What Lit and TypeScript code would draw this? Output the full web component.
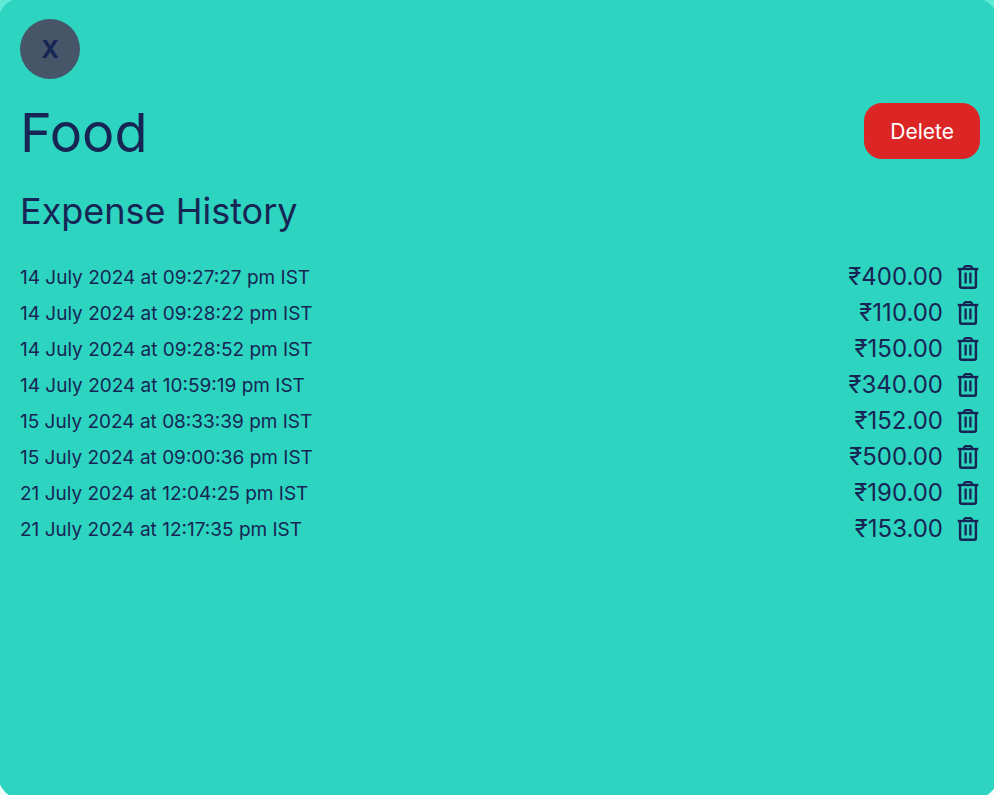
import { LitElement, html, css } from "lit";
import { customElement, state } from "lit/decorators.js";

interface Expense {
  date: string;
  amount: string;
}

@customElement("trash-icon")
class TrashIcon extends LitElement {
  static styles = css`
    :host { display: block; }
    svg { display: block; width: 24px; height: 28px; }
  `;
  render() {
    return html`<svg viewBox="0 0 24 28" fill="none" stroke="currentColor" stroke-width="2.3" stroke-linejoin="round" aria-hidden="true">
      <path d="M1.7 6H22.3" />
      <path d="M7.5 6L8.3 4.2Q8.8 3.1 9.8 3.1H14.2Q15.2 3.1 15.7 4.2L16.5 6" />
      <path d="M4.1 6V23.2Q4.1 24.7 5.6 24.7H18.4Q19.9 24.7 19.9 23.2V6" stroke-width="2.4" />
      <path d="M9.6 9.6V20.6M14.4 9.6V20.6" />
    </svg>`;
  }
}

@customElement("app-root")
class AppRoot extends LitElement {
  static styles = css`
    :host {
      display: flex;
      flex-direction: column;
      min-height: 100vh;
      overflow: hidden;
      box-sizing: border-box;
      background: linear-gradient(#5eead4 50%, #f0fdfa 50%);
      color: #172554;
      font-family: Inter, "Noto Sans", sans-serif;
    }
    .panel {
      flex: 1;
      margin: -2px -4px -4px -2px;
      padding: 21px 18px 24px 22px;
      border-radius: 24px;
      background: #2dd4bf;
    }
    button {
      border: 0;
      padding: 0;
      font: inherit;
      color: inherit;
      cursor: pointer;
    }
    .close {
      display: block;
      width: 60px;
      height: 60px;
      border-radius: 50%;
      background: #475569;
      font-size: 24px;
      font-weight: 700;
    }
    .header {
      display: flex;
      align-items: flex-start;
      justify-content: space-between;
      margin-top: 24px;
    }
    h1, h2 { margin: 0; font-weight: 400; }
    h1 { font-size: 54px; line-height: 60px; }
    h2 { margin-top: 26px; font-size: 36px; line-height: 44px; }
    .delete {
      padding: 0 26px;
      height: 56px;
      border-radius: 18px;
      background: #dc2626;
      color: #fff;
      font-size: 21px;
    }
    ul { list-style: none; margin: 26px 0 0; padding: 0; }
    li {
      display: flex;
      align-items: center;
      height: 36px;
    }
    time { flex: 1; font-size: 19px; }
    .amount { font-size: 24px; line-height: 30px; }
    .remove { margin-left: 13px; background: none; }
  `;

  @state() private expenses: Expense[] = [
    { date: "14 July 2024 at 09:27:27 pm IST", amount: "₹400.00" },
    { date: "14 July 2024 at 09:28:22 pm IST", amount: "₹110.00" },
    { date: "14 July 2024 at 09:28:52 pm IST", amount: "₹150.00" },
    { date: "14 July 2024 at 10:59:19 pm IST", amount: "₹340.00" },
    { date: "15 July 2024 at 08:33:39 pm IST", amount: "₹152.00" },
    { date: "15 July 2024 at 09:00:36 pm IST", amount: "₹500.00" },
    { date: "21 July 2024 at 12:04:25 pm IST", amount: "₹190.00" },
    { date: "21 July 2024 at 12:17:35 pm IST", amount: "₹153.00" },
  ];

  private remove(expense: Expense) {
    this.expenses = this.expenses.filter((e) => e !== expense);
  }

  render() {
    return html`<main class="panel">
      <button class="close" type="button">X</button>
      <div class="header">
        <h1>Food</h1>
        <button class="delete" type="button">Delete</button>
      </div>
      <h2>Expense History</h2>
      <ul>
        ${this.expenses.map(
          (e) => html`<li>
            <time>${e.date}</time>
            <span class="amount">${e.amount}</span>
            <button class="remove" type="button" aria-label="Delete expense" @click=${() => this.remove(e)}>
              <trash-icon></trash-icon>
            </button>
          </li>`
        )}
      </ul>
    </main>`;
  }
}
